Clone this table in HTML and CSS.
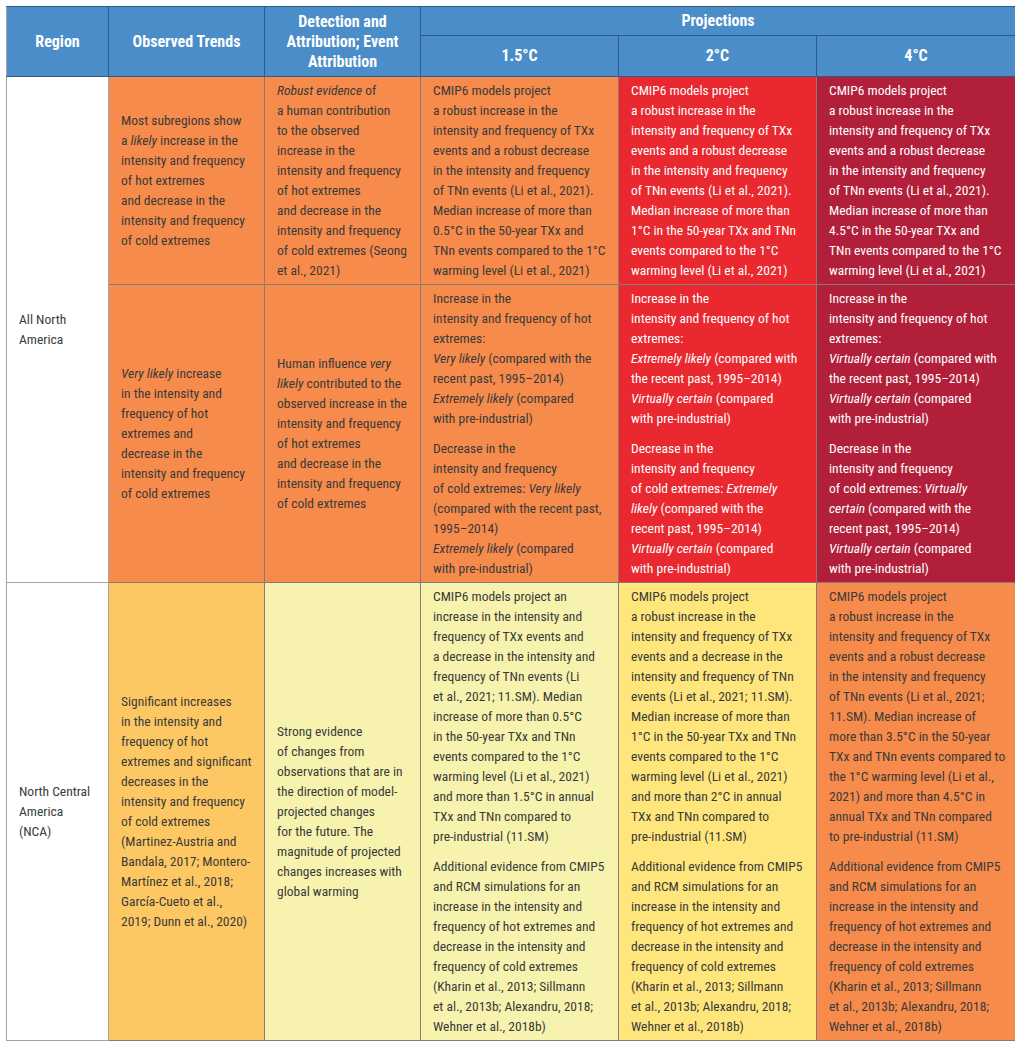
FILE: index.html
```html
<!DOCTYPE html>
<html lang="en">
<head>
<meta charset="utf-8">
<title>North America – hot and cold extremes</title>
<link rel="stylesheet" href="styles.css">
</head>
<body>
<table class="tbl">
  <colgroup>
    <col class="c-region"><col class="c-obs"><col class="c-det"><col class="c-p"><col class="c-p"><col class="c-p4">
  </colgroup>
  <thead>
    <tr class="h1">
      <th rowspan="2">Region</th>
      <th rowspan="2">Observed Trends</th>
      <th rowspan="2">Detection and<br>Attribution; Event<br>Attribution</th>
      <th colspan="3">Projections</th>
    </tr>
    <tr class="h2">
      <th>1.5°C</th>
      <th>2°C</th>
      <th>4°C</th>
    </tr>
  </thead>
  <tbody>
    <tr>
      <td rowspan="2" class="region">All North<br>America</td>
      <td class="mid orange">Most subregions show<br>a <i>likely</i> increase in the<br>intensity and frequency<br>of hot extremes<br>and decrease in the<br>intensity and frequency<br>of cold extremes</td>
      <td class="mid orange"><i>Robust evidence</i> of<br>a human contribution<br>to the observed<br>increase in the<br>intensity and frequency<br>of hot extremes<br>and decrease in the<br>intensity and frequency<br>of cold extremes (Seong<br>et al., 2021)</td>
      <td class="top orange">CMIP6 models project<br>a robust increase in the<br>intensity and frequency of TXx<br>events and a robust decrease<br>in the intensity and frequency<br>of TNn events (Li et al., 2021).<br>Median increase of more than<br>0.5°C in the 50-year TXx and<br>TNn events compared to the 1°C<br>warming level (Li et al., 2021)</td>
      <td class="top red">CMIP6 models project<br>a robust increase in the<br>intensity and frequency of TXx<br>events and a robust decrease<br>in the intensity and frequency<br>of TNn events (Li et al., 2021).<br>Median increase of more than<br>1°C in the 50-year TXx and TNn<br>events compared to the 1°C<br>warming level (Li et al., 2021)</td>
      <td class="top darkred">CMIP6 models project<br>a robust increase in the<br>intensity and frequency of TXx<br>events and a robust decrease<br>in the intensity and frequency<br>of TNn events (Li et al., 2021).<br>Median increase of more than<br>4.5°C in the 50-year TXx and<br>TNn events compared to the 1°C<br>warming level (Li et al., 2021)</td>
    </tr>
    <tr>
      <td class="mid orange"><i>Very likely</i> increase<br>in the intensity and<br>frequency of hot<br>extremes and<br>decrease in the<br>intensity and frequency<br>of cold extremes</td>
      <td class="mid orange">Human influence <i>very</i><br><i>likely</i> contributed to the<br>observed increase in the<br>intensity and frequency<br>of hot extremes<br>and decrease in the<br>intensity and frequency<br>of cold extremes</td>
      <td class="top orange">
        <p>Increase in the<br>intensity and frequency of hot<br>extremes:<br><i>Very likely</i> (compared with the<br>recent past, 1995–2014)<br><i>Extremely likely</i> (compared<br>with pre-industrial)</p>
        <p>Decrease in the<br>intensity and frequency<br>of cold extremes: <i>Very likely</i><br>(compared with the recent past,<br>1995–2014)<br><i>Extremely likely</i> (compared<br>with pre-industrial)</p>
      </td>
      <td class="top red">
        <p>Increase in the<br>intensity and frequency of hot<br>extremes:<br><i>Extremely likely</i> (compared with<br>the recent past, 1995–2014)<br><i>Virtually certain</i> (compared<br>with pre-industrial)</p>
        <p>Decrease in the<br>intensity and frequency<br>of cold extremes: <i>Extremely</i><br><i>likely</i> (compared with the<br>recent past, 1995–2014)<br><i>Virtually certain</i> (compared<br>with pre-industrial)</p>
      </td>
      <td class="top darkred">
        <p>Increase in the<br>intensity and frequency of hot<br>extremes:<br><i>Virtually certain</i> (compared with<br>the recent past, 1995–2014)<br><i>Virtually certain</i> (compared<br>with pre-industrial)</p>
        <p>Decrease in the<br>intensity and frequency<br>of cold extremes: <i>Virtually</i><br><i>certain</i> (compared with the<br>recent past, 1995–2014)<br><i>Virtually certain</i> (compared<br>with pre-industrial)</p>
      </td>
    </tr>
    <tr>
      <td class="region">North Central<br>America<br>(NCA)</td>
      <td class="mid amber">Significant increases<br>in the intensity and<br>frequency of hot<br>extremes and significant<br>decreases in the<br>intensity and frequency<br>of cold extremes<br>(Martinez-Austria and<br>Bandala, 2017; Montero-<br>Martínez et al., 2018;<br>García-Cueto et al.,<br>2019; Dunn et al., 2020)</td>
      <td class="mid pale">Strong evidence<br>of changes from<br>observations that are in<br>the direction of model-<br>projected changes<br>for the future. The<br>magnitude of projected<br>changes increases with<br>global warming</td>
      <td class="top pale">
        <p>CMIP6 models project an<br>increase in the intensity and<br>frequency of TXx events and<br>a decrease in the intensity and<br>frequency of TNn events (Li<br>et al., 2021; 11.SM). Median<br>increase of more than 0.5°C<br>in the 50-year TXx and TNn<br>events compared to the 1°C<br>warming level (Li et al., 2021)<br>and more than 1.5°C in annual<br>TXx and TNn compared to<br>pre-industrial (11.SM)</p>
        <p>Additional evidence from CMIP5<br>and RCM simulations for an<br>increase in the intensity and<br>frequency of hot extremes and<br>decrease in the intensity and<br>frequency of cold extremes<br>(Kharin et al., 2013; Sillmann<br>et al., 2013b; Alexandru, 2018;<br>Wehner et al., 2018b)</p>
      </td>
      <td class="top yellow">
        <p>CMIP6 models project<br>a robust increase in the<br>intensity and frequency of TXx<br>events and a decrease in the<br>intensity and frequency of TNn<br>events (Li et al., 2021; 11.SM).<br>Median increase of more than<br>1°C in the 50-year TXx and TNn<br>events compared to the 1°C<br>warming level (Li et al., 2021)<br>and more than 2°C in annual<br>TXx and TNn compared to<br>pre-industrial (11.SM)</p>
        <p>Additional evidence from CMIP5<br>and RCM simulations for an<br>increase in the intensity and<br>frequency of hot extremes and<br>decrease in the intensity and<br>frequency of cold extremes<br>(Kharin et al., 2013; Sillmann<br>et al., 2013b; Alexandru, 2018;<br>Wehner et al., 2018b)</p>
      </td>
      <td class="top orange">
        <p>CMIP6 models project<br>a robust increase in the<br>intensity and frequency of TXx<br>events and a robust decrease<br>in the intensity and frequency<br>of TNn events (Li et al., 2021;<br>11.SM). Median increase of<br>more than 3.5°C in the 50-year<br>TXx and TNn events compared to<br>the 1°C warming level (Li et al.,<br>2021) and more than 4.5°C in<br>annual TXx and TNn compared<br>to pre-industrial (11.SM)</p>
        <p>Additional evidence from CMIP5<br>and RCM simulations for an<br>increase in the intensity and<br>frequency of hot extremes and<br>decrease in the intensity and<br>frequency of cold extremes<br>(Kharin et al., 2013; Sillmann<br>et al., 2013b; Alexandru, 2018;<br>Wehner et al., 2018b)</p>
      </td>
    </tr>
  </tbody>
</table>
</body>
</html>
```

FILE: styles.css
```css
html, body {
  background: #ffffff;
}
body {
  margin: 6px;
  font-family: "Roboto Condensed", "Noto Sans", sans-serif;
  font-stretch: condensed;
  color: #3a3a3a;
}
.tbl {
  border-collapse: collapse;
  table-layout: fixed;
  width: 1009px;
}
.c-region { width: 102px; }
.c-obs { width: 156px; }
.c-det { width: 156px; }
.c-p { width: 198px; }
.c-p4 { width: 199px; }

th {
  background: #4b8dc9;
  color: #ffffff;
  font-weight: bold;
  font-size: 16px;
  line-height: 20px;
  border: 1px solid #2e5c89;
  padding: 0 4px;
  text-align: center;
  vertical-align: middle;
}
.h1 th { height: 28px; }
.h2 th { height: 40px; }
thead tr:first-child th:first-child { border-left: 1px solid #a8a8a8; }
thead tr:first-child th:last-child { border-right: 1px solid #a8a8a8; }

td {
  font-size: 13.5px;
  line-height: 20px;
  padding: 3px 12px 4px;
  border: 1px solid #857b77;
  white-space: nowrap;
  overflow: hidden;
}
td p { margin: 0; }
td p + p { margin-top: 10px; }
.mid { vertical-align: middle; }
.top { vertical-align: top; }
.region {
  background: #ffffff;
  vertical-align: middle;
  border-color: #a3a3a3;
}
.orange { background: #f68b4b; }
.red { background: #e9282f; color: #ffffff; }
.darkred { background: #b11f3b; color: #ffffff; }
.amber { background: #fdc863; }
.pale { background: #f7f3ae; }
.yellow { background: #fee67d; }
i { font-style: italic; }
```
